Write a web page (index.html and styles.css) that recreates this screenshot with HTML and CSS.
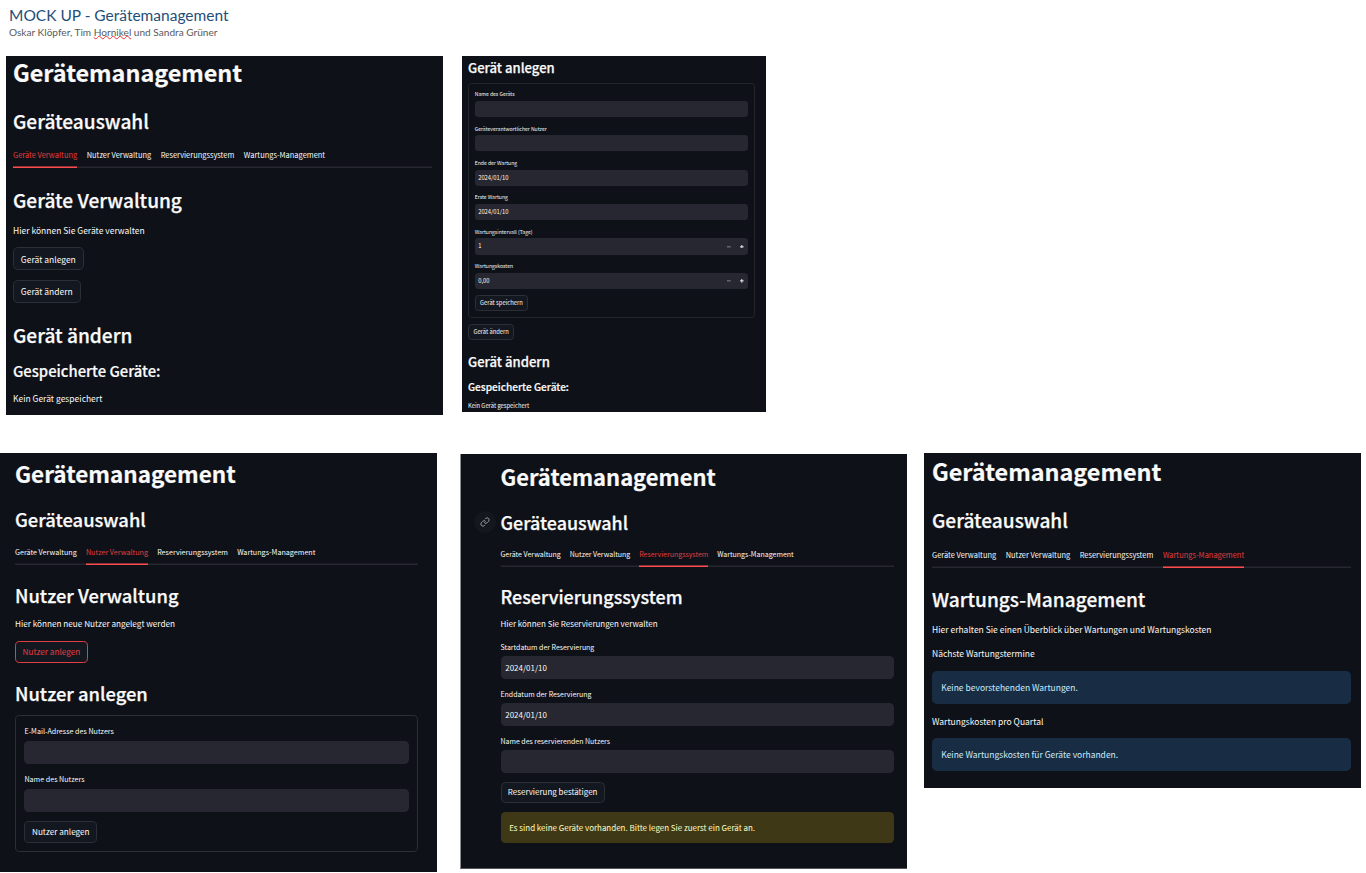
FILE: index.html
```html
<!DOCTYPE html>
<html lang="de">
<head>
<meta charset="utf-8">
<title>MOCK UP - Gerätemanagement</title>
<link rel="stylesheet" href="styles.css">
</head>
<body>
<header class="doc-head">
  <h1 class="doc-title"><span>MOCK UP - Gerätemanagement</span></h1>
  <p class="doc-authors">Oskar Klöpfer, Tim <span class="typo">Hornikel</span> und Sandra Grüner</p>
</header>

<main class="board">
  <div class="row row-top">
    <section class="panel panel-devices">
      <h1 class="title">Gerätemanagement</h1>
      <h2 class="heading">Geräteauswahl</h2>
      <nav class="tabs"><a class="tab active">Geräte Verwaltung</a><a class="tab">Nutzer Verwaltung</a><a class="tab">Reservierungssystem</a><a class="tab">Wartungs-Management</a></nav>
      <h2 class="heading">Geräte Verwaltung</h2>
      <p class="text">Hier können Sie Geräte verwalten</p>
      <button class="btn spaced">Gerät anlegen</button>
      <button class="btn spaced">Gerät ändern</button>
      <h2 class="heading spaced">Gerät ändern</h2>
      <h3 class="subheading">Gespeicherte Geräte:</h3>
      <p class="text">Kein Gerät gespeichert</p>
    </section>

    <section class="panel panel-create">
      <h2 class="heading first">Gerät anlegen</h2>
      <form class="form">
        <label class="label">Name des Geräts</label>
        <div class="input"></div>
        <label class="label spaced">Geräteverantwortlicher Nutzer</label>
        <div class="input"></div>
        <label class="label spaced">Ende der Wartung</label>
        <div class="input">2024/01/10</div>
        <label class="label spaced">Erste Wartung</label>
        <div class="input">2024/01/10</div>
        <label class="label spaced">Wartungsintervall (Tage)</label>
        <div class="input">1<span class="steps"><svg class="step dim" viewBox="0 0 8 8"><path d="M0 4H8"/></svg><svg class="step" viewBox="0 0 8 8"><path d="M0 4H8M4 0V8"/></svg></span></div>
        <label class="label spaced">Wartungskosten</label>
        <div class="input">0,00<span class="steps"><svg class="step dim" viewBox="0 0 8 8"><path d="M0 4H8"/></svg><svg class="step" viewBox="0 0 8 8"><path d="M0 4H8M4 0V8"/></svg></span></div>
        <button class="btn spaced" type="button">Gerät speichern</button>
      </form>
      <button class="btn spaced">Gerät ändern</button>
      <h2 class="heading spaced">Gerät ändern</h2>
      <h3 class="subheading">Gespeicherte Geräte:</h3>
      <p class="text">Kein Gerät gespeichert</p>
    </section>
  </div>

  <div class="row row-bottom">
    <section class="panel panel-users">
      <h1 class="title">Gerätemanagement</h1>
      <h2 class="heading">Geräteauswahl</h2>
      <nav class="tabs"><a class="tab">Geräte Verwaltung</a><a class="tab active">Nutzer Verwaltung</a><a class="tab">Reservierungssystem</a><a class="tab">Wartungs-Management</a></nav>
      <h2 class="heading">Nutzer Verwaltung</h2>
      <p class="text">Hier können neue Nutzer angelegt werden</p>
      <button class="btn spaced pressed">Nutzer anlegen</button>
      <h2 class="heading spaced">Nutzer anlegen</h2>
      <form class="form">
        <label class="label">E-Mail-Adresse des Nutzers</label>
        <div class="input"></div>
        <label class="label spaced">Name des Nutzers</label>
        <div class="input"></div>
        <button class="btn spaced" type="button">Nutzer anlegen</button>
      </form>
    </section>

    <section class="panel panel-booking">
      <h1 class="title">Gerätemanagement</h1>
      <h2 class="heading anchored"><span class="anchor"><svg viewBox="0 0 24 24"><path d="M10 13a5 5 0 0 0 7.54.54l3-3a5 5 0 0 0-7.07-7.07l-1.72 1.71"/><path d="M14 11a5 5 0 0 0-7.54-.54l-3 3a5 5 0 0 0 7.07 7.07l1.71-1.71"/></svg></span>Geräteauswahl</h2>
      <nav class="tabs"><a class="tab">Geräte Verwaltung</a><a class="tab">Nutzer Verwaltung</a><a class="tab active">Reservierungssystem</a><a class="tab">Wartungs-Management</a></nav>
      <h2 class="heading">Reservierungssystem</h2>
      <p class="text">Hier können Sie Reservierungen verwalten</p>
      <label class="label spaced">Startdatum der Reservierung</label>
      <div class="input">2024/01/10</div>
      <label class="label spaced">Enddatum der Reservierung</label>
      <div class="input">2024/01/10</div>
      <label class="label spaced">Name des reservierenden Nutzers</label>
      <div class="input"></div>
      <button class="btn spaced">Reservierung bestätigen</button>
      <div class="alert warning spaced">Es sind keine Geräte vorhanden. Bitte legen Sie zuerst ein Gerät an.</div>
    </section>

    <section class="panel panel-service">
      <h1 class="title">Gerätemanagement</h1>
      <h2 class="heading">Geräteauswahl</h2>
      <nav class="tabs"><a class="tab">Geräte Verwaltung</a><a class="tab">Nutzer Verwaltung</a><a class="tab">Reservierungssystem</a><a class="tab active">Wartungs-Management</a></nav>
      <h2 class="heading">Wartungs-Management</h2>
      <p class="text">Hier erhalten Sie einen Überblick über Wartungen und Wartungskosten</p>
      <p class="text spaced">Nächste Wartungstermine</p>
      <div class="alert info spaced">Keine bevorstehenden Wartungen.</div>
      <p class="text spaced">Wartungskosten pro Quartal</p>
      <div class="alert info spaced">Keine Wartungskosten für Geräte vorhanden.</div>
    </section>
  </div>
</main>
</body>
</html>
```
FILE: styles.css
```css
* { box-sizing: border-box; margin: 0; padding: 0; }

body {
  width: 1366px;
  height: 873px;
  overflow: hidden;
  background: #fff;
  white-space: nowrap;
}

.doc-head { height: 56px; padding: 5px 0 0 9px; font-family: Lato, "Open Sans", sans-serif; }
.doc-title { font-size: 15.5px; line-height: 20px; font-weight: 400; color: #1f4e79; }
.doc-authors { font-size: 10.1px; line-height: 15px; color: #5a5a5a; }
.typo { text-decoration: underline wavy #e33 1px; text-underline-offset: -1px; text-decoration-skip-ink: none; }

.row { display: flex; align-items: flex-start; }
.row-top { height: 397px; padding-left: 6px; gap: 19px; }

/* --u is the size of one app pixel inside a panel */
.panel {
  display: flex;
  flex-direction: column;
  align-items: flex-start;
  overflow: hidden;
  background: #0e1117;
  color: #fafafa;
  font-family: "Noto Sans CJK JP", "Noto Sans CJK SC", sans-serif;
}
.panel-devices { --u: 0.5945px; width: 437px; height: 359px; padding: 1px 11px 0 7px; }
.panel-create { --u: 0.4075px; width: 304px; height: 356px; padding: 3px 11px 0 6px; }
.panel-users { --u: 0.5725px; width: 437px; height: 419px; padding: 5px 19px 0 15px; }
.panel-booking { --u: 0.5585px; width: 447px; height: 415px; margin: 1px 0 0 23px; padding: 8px 13px 0 39.5px; border-left: 1px solid #8a8d92; border-bottom: 1px solid #53565b; }
.panel-service { --u: 0.595px; width: 437px; height: 335px; margin-left: 17px; padding: 3px 10px 0 8px; }

.spaced { margin-top: calc(var(--u) * 16); }

.title {
  font-size: calc(var(--u) * 39.3);
  line-height: calc(var(--u) * 52.8);
  font-weight: 700;
  -webkit-text-stroke: 0.2px;
}
.heading {
  padding: calc(var(--u) * 16) 0;
  font-size: calc(var(--u) * 32.1);
  line-height: calc(var(--u) * 43.2);
  font-weight: 500;
  -webkit-text-stroke: 0.25px;
}
.title + .heading { padding-top: calc(var(--u) * 33.5); }
.heading.first { padding-top: 0; padding-bottom: calc(var(--u) * 15); }
.subheading {
  padding: calc(var(--u) * 8) 0 calc(var(--u) * 16);
  font-size: calc(var(--u) * 24.9);
  line-height: calc(var(--u) * 33.6);
  font-weight: 500;
  -webkit-text-stroke: 0.2px;
}
.text { font-size: calc(var(--u) * 14.3); line-height: calc(var(--u) * 25.6); }

.tabs {
  display: flex;
  align-self: stretch;
  gap: calc(var(--u) * 16);
  height: calc(var(--u) * 42);
  margin-bottom: calc(var(--u) * 15.5);
  box-shadow: inset 0 -1.5px #262730;
}
.panel-devices .tabs { margin-bottom: calc(var(--u) * 16); }
.tab { font-size: calc(var(--u) * 12.55); line-height: calc(var(--u) * 40.5); }
.tab.active { color: #e23d40; box-shadow: inset 0 -1.5px #ff4b4b; }

.btn {
  height: calc(var(--u) * 38.4);
  padding: 0 calc(var(--u) * 13.2 - 1px);
  border: 1px solid #2c2f36;
  border-radius: calc(var(--u) * 8);
  background: #131720;
  color: #fafafa;
  font-family: inherit;
  font-size: calc(var(--u) * 14.3);
  line-height: 1;
}
.btn.pressed { color: #e23d40; border-color: #e04044; }

.form {
  display: flex;
  flex-direction: column;
  align-items: flex-start;
  align-self: stretch;
  padding: calc(var(--u) * 16.5 - 1px);
  border: 1px solid #2c2f36;
  border-radius: calc(var(--u) * 8);
}
.panel-create .form { border-color: #22252b; }
.label {
  margin-bottom: calc(var(--u) * 4);
  font-size: calc(var(--u) * 12.5);
  line-height: calc(var(--u) * 24);
}
.label.spaced { margin-top: calc(var(--u) * 16.3); }
.input {
  display: flex;
  align-items: center;
  align-self: stretch;
  height: calc(var(--u) * 40);
  padding: 0 calc(var(--u) * 8.5);
  border-radius: calc(var(--u) * 8);
  background: #262730;
  font-size: calc(var(--u) * 14.3);
  line-height: 1;
}
.steps { display: flex; gap: calc(var(--u) * 23); margin-left: auto; padding-right: calc(var(--u) * 3); }
.step { width: calc(var(--u) * 9); height: calc(var(--u) * 9); fill: none; stroke: #fafafa; stroke-width: 2; }
.step.dim { stroke: #8b8c93; }

.alert {
  align-self: stretch;
  height: calc(var(--u) * 55.6);
  padding-left: calc(var(--u) * 15.5);
  border-radius: calc(var(--u) * 8);
  font-size: calc(var(--u) * 14.3);
  line-height: calc(var(--u) * 55.6);
}
.warning { background: #3e3816; color: #ffffc2; }
.info { background: #182d43; color: #c7ebff; }

.anchored { position: relative; }
.anchor {
  position: absolute;
  left: -27px;
  bottom: 10px;
  width: 22px;
  height: 22px;
  display: grid;
  place-items: center;
  border-radius: 50%;
  background: #14171e;
}
.anchor svg { width: 10px; height: 10px; fill: none; stroke: #b0b2b6; stroke-width: 2; }
```
